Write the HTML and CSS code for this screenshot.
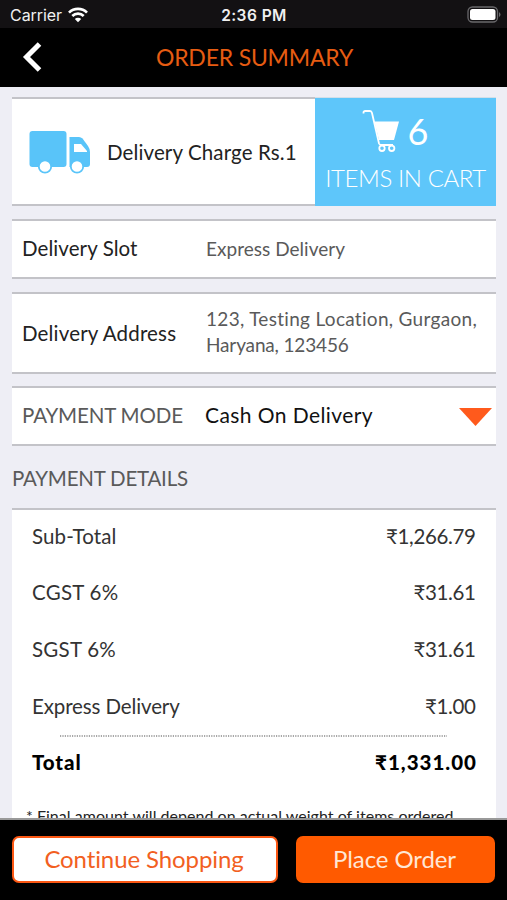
FILE: index.html
```html
<!DOCTYPE html>
<html lang="en">
<head>
<meta charset="utf-8">
<title>Order Summary</title>
<link rel="stylesheet" href="styles.css">
</head>
<body>
<div class="screen">
  <div class="status">
    <div class="carrier"><span>Carrier</span>
      <svg class="wifi" width="20" height="16" viewBox="0 0 20 16" fill="none" stroke="#fff" stroke-width="2.7"><path d="M1 5.6a12.8 12.8 0 0 1 18 0M4.3 9a8.1 8.1 0 0 1 11.4 0"/><path d="M10 15.2L6.8 12a4.6 4.6 0 0 1 6.4 0z" fill="#fff" stroke="none"/></svg>
    </div>
    <div class="clock">2:36 PM</div>
    <svg class="battery" width="34" height="17" viewBox="0 0 34 17"><rect x="1" y="1" width="29.5" height="15" rx="4.5" fill="none" stroke="#69686b" stroke-width="1.3"/><rect x="3" y="3" width="25.5" height="11" rx="2.5" fill="#fff"/><path d="M32 6v5q1.5-1 1.500-2.500t-1.500-2.500z" fill="#69686b"/></svg>
  </div>
  <header class="nav">
    <svg class="back" width="20" height="30" viewBox="0 0 20 30" fill="none" stroke="#fff" stroke-width="5"><path d="M17.500 2L4.500 15L17.500 28"/></svg>
    <h1>ORDER SUMMARY</h1>
  </header>
  <main class="content">
    <section class="card charge">
      <div class="charge-info">
        <svg width="62" height="44" viewBox="0 0 62 44" fill="#59c4f9"><path d="M3.500 1h31q3 0 3 3v30q0 3-3 3H3.500q-3 0-3-3V4q0-3 3-3z"/><path d="M40.500 7H50q2 0 3.500 1.500L59 16q2 3 2 6v12q0 3-3 3H40.500z"/><path d="M45 14h7l6 7v1H45z" fill="#fff"/><circle cx="16" cy="36.500" r="6.200" fill="#fff" stroke="#59c4f9" stroke-width="1.800"/><circle cx="48" cy="36.500" r="6.200" fill="#fff" stroke="#59c4f9" stroke-width="1.800"/></svg>
        <span class="charge-text">Delivery Charge Rs.1</span>
      </div>
      <div class="cart">
        <div class="cart-count">
          <svg width="38" height="43" viewBox="0 0 38 43" fill="none" stroke="#fff" stroke-width="1.800"><path d="M1.500 4.500V3.500Q1.500 2 3.200 2H8Q9.500 2 10 4L17 34.500Q17.500 36 19.500 36H31"/><path d="M12.300 12.500H37L32 31H17z" fill="#fff" stroke="none"/><circle cx="20" cy="39.300" r="2.700"/><circle cx="29.700" cy="39.300" r="2.700"/></svg>
          <span class="six">6</span>
        </div>
        <div class="cart-text">ITEMS IN CART</div>
      </div>
    </section>
    <section class="card field slot"><span class="label l-slot">Delivery Slot</span><span class="value v-slot">Express Delivery</span></section>
    <section class="card field address"><span class="label l-addr">Delivery Address</span><span class="value v-addr"><span class="a1">123, Testing Location, Gurgaon,</span><br><span class="a2">Haryana, 123456</span></span></section>
    <section class="card field mode"><span class="label l-mode">PAYMENT MODE</span><span class="value v-mode">Cash On Delivery</span>
      <svg class="caret" width="33" height="18" viewBox="0 0 33 18"><path d="M0 0H33L16.500 18z" fill="#ff5a1c"/></svg>
    </section>
    <h2>PAYMENT DETAILS</h2>
    <section class="card details">
      <div class="row"><span class="r1">Sub-Total</span><span class="price">₹1,266.79</span></div>
      <div class="row"><span class="r2">CGST 6%</span><span class="price">₹31.61</span></div>
      <div class="row"><span class="r2">SGST 6%</span><span class="price">₹31.61</span></div>
      <div class="row"><span class="r4">Express Delivery</span><span class="price">₹1.00</span></div>
      <svg class="rule" width="387" height="2" viewBox="0 0 387 2"><path d="M0 1H387" stroke="#8a8a8a" stroke-width="1.600" stroke-dasharray="1.200 1.200"/></svg>
      <div class="row total"><span class="r5">Total</span><span class="p5">₹1,331.00</span></div>
      <p class="note">* Final amount will depend on actual weight of items ordered.</p>
    </section>
  </main>
  <footer class="actions">
    <button class="btn continue">Continue Shopping</button>
    <button class="btn place">Place Order</button>
  </footer>
</div>
</body>
</html>
```
FILE: styles.css
```css
* { box-sizing: border-box; }
body { margin: 0; font-family: Lato, sans-serif; font-variant-ligatures: none; }
.screen { width: 507px; height: 900px; display: flex; flex-direction: column; overflow: hidden; background: #eeeef5; }
.status { flex: none; height: 28px; background: #131113; color: #f0f0f0; display: grid; grid-template-columns: 1fr auto 1fr; align-items: center; padding: 2px 6px 0 10px; font-family: Inter, sans-serif; font-size: 16px; }
.carrier { display: flex; align-items: center; gap: 6px; }
.carrier span { letter-spacing: -0.05px; }
.clock { font-weight: 600; font-size: 15.500px; letter-spacing: 0.45px; margin-right: 3px; }
.battery { justify-self: end; margin-top: -2px; }
.nav { flex: none; height: 59px; background: #000; display: grid; grid-template-columns: 1fr auto 1fr; align-items: center; padding: 0 20px 2px 22px; }
h1 { margin: 0; font-size: 23px; font-weight: 400; color: #e65c12; letter-spacing: -0.2px; white-space: nowrap; }
.content { flex: 1; min-height: 0; overflow: hidden; padding: 10px 11px 0 12px; border-bottom: 2px solid #999; }
.card { background: #fff; border-top: 2px solid #c3c3c8; border-bottom: 2px solid #c3c3c8; }
.charge { height: 109px; display: flex; margin-bottom: 13px; border: 0; }
.charge-info { flex: 1; display: flex; align-items: center; padding-left: 17px; gap: 16px; border-top: 2px solid #c3c3c8; border-bottom: 2px solid #c3c3c8; }
.charge-text { font-size: 20.500px; color: #222; white-space: nowrap; letter-spacing: 0.12px; }
.cart { width: 181px; background: #5ec6fa; color: #fff; display: flex; flex-direction: column; align-items: center; padding-top: 11px; border-top: 1px solid #d3dfe9; }
.cart-count { display: flex; height: 43px; gap: 8px; align-items: center; margin-right: 21px; }
.six { font-size: 36px; line-height: 43px; height: 42px; }
.cart-text { font-size: 24px; line-height: 30px; margin-top: 11px; white-space: nowrap; font-weight: 300; letter-spacing: -0.4px; }
.field { display: flex; align-items: center; padding: 0 0 2px 10px; font-size: 20.500px; color: #222; }
.label { width: 184px; white-space: nowrap; }
.value { font-size: 19px; line-height: 25.500px; color: #5a5a5a; white-space: nowrap; }
.l-slot { letter-spacing: 0.08px; }
.l-addr { letter-spacing: 0.17px; }
.v-slot { letter-spacing: 0.03px; padding-top: 1px; }
.a1 { letter-spacing: 0.3px; }
.a2 { letter-spacing: -0.15px; }
.v-addr { padding-bottom: 1px; }
.slot { height: 60px; margin-bottom: 13px; }
.address { height: 82px; margin-bottom: 12px; }
.address .label { padding-top: 2px; }
.mode { height: 60px; }
.l-mode { color: #5a5a5a; width: 183px; letter-spacing: -0.15px; }
.v-mode { font-size: 21px; color: #111; letter-spacing: 0.42px; }
.caret { margin: 3px 4px 0 auto; }
h2 { margin: 0; height: 62px; line-height: 65px; font-size: 20.500px; font-weight: 400; color: #5a5a5a; letter-spacing: -0.22px; }
.details { height: 330px; }
.row { height: 56.600px; display: flex; justify-content: space-between; align-items: center; padding: 0 20px 5px; font-size: 20.500px; color: #333; }
.r1 { letter-spacing: 0.1px; }
.r2 { letter-spacing: 0.25px; }
.r4 { letter-spacing: -0.12px; }
.price { letter-spacing: -0.35px; margin-right: 0.4px; }
.rule { display: block; margin: -1px auto -1px 48px; }
.total { font-weight: 900; color: #000; }
.r5 { letter-spacing: 0.9px; }
.p5 { letter-spacing: 1px; margin-right: -1px; }
.note { margin: 11px 0 0; padding-left: 14px; font-size: 16px; line-height: 24px; color: #222; white-space: nowrap; letter-spacing: 0.03px; }
.actions { flex: none; height: 80px; background: #000; display: flex; gap: 18px; padding: 16px 12px 0 12px; }
.btn { height: 47px; border-radius: 7px; border: 2px solid #fb5713; padding: 0 0 2px; font: 400 24px Lato, sans-serif; white-space: nowrap; font-variant-ligatures: none; }
.continue { width: 266px; background: #fff; color: #f2601f; letter-spacing: -0.1px; padding-right: 2px; }
.place { width: 199px; background: #ff5a00; border-color: #ff5a00; color: #ffe6d5; letter-spacing: -0.1px; padding-right: 2px; }
```
